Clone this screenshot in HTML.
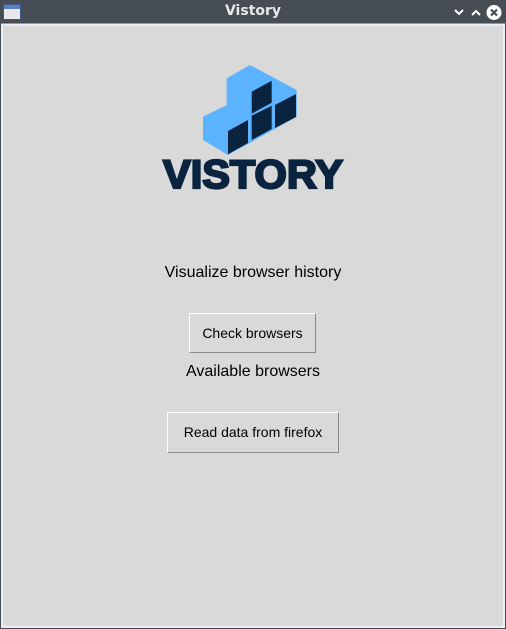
<!DOCTYPE html>
<html><head><style>
*{margin:0;padding:0;box-sizing:border-box}
body{width:506px;height:629px;background:#474d55;position:relative;overflow:hidden;font-family:"Liberation Sans","DejaVu Sans",sans-serif}
.tb{position:absolute;left:0;top:0;width:506px;height:23px;background:#474d55}
.title{position:absolute;top:3px;left:0;width:506px;text-align:center;color:#e8e8e8;font-weight:bold;font-size:14px;font-family:"DejaVu Sans",sans-serif}
.frame{position:absolute;left:1px;top:23px;width:504px;height:605px;background:#eceff1;border-top:1px solid #5fa7d8}
.content{position:absolute;left:3px;top:26px;width:500px;height:600px;background:#d9d9d9}
.t{position:absolute;left:0;width:506px;text-align:center;color:#000;font-size:16px}
.btn{position:absolute;background:#d9d9d9;border:1px solid;border-color:#fff #8a8a8a #8a8a8a #fff;font-size:14px;text-align:center;color:#000}
</style></head><body>
<div class="tb">
<svg style="position:absolute;left:3px;top:4px" width="18" height="16"><rect x="0.5" y="0.5" width="17" height="15" fill="#e8e8ec" stroke="#3a5a90"/><rect x="1" y="1" width="16" height="4" fill="#5a80c0"/></svg>
<div class="title">Vistory</div>
<svg style="position:absolute;left:450px;top:5px" width="56" height="16">
<path d="M5 5 L9 9 L13 5" stroke="#fff" stroke-width="2" fill="none"/>
<path d="M22 10 L26 6 L30 10" stroke="#fff" stroke-width="2" fill="none"/>
<circle cx="44" cy="7.5" r="7.5" fill="#fff"/>
<path d="M41 4.5 L47 10.5 M47 4.5 L41 10.5" stroke="#474d55" stroke-width="2.2"/>
</svg>
</div>
<div class="frame"></div>
<div class="content"></div>
<svg style="position:absolute;left:0;top:0" width="506" height="200">
<polygon points="226.7,78.3 250,65 296.7,90 296.7,116.7 228,155 203,140 203,116.7 226.7,105" fill="#5cb3ff"/>
<polygon points="251.7,91.7 271.7,80.7 271.7,102.7 251.7,113.7" fill="#0a2440"/>
<polygon points="275,105 296,94 296,117 275,128" fill="#0a2440"/>
<polygon points="251.7,115.7 271.7,105.7 271.7,129 251.7,140" fill="#0a2440"/>
<polygon points="228,131 248,120 248,143 228,154.3" fill="#0a2440"/>
<g transform="translate(0,188) scale(1,1.1) translate(0,-188)">
<text x="163" y="188" textLength="180" lengthAdjust="spacingAndGlyphs" font-family="Liberation Sans" font-weight="bold" font-size="36" fill="#0a2440" stroke="#0a2440" stroke-width="2">VISTORY</text>
</g>
</svg>
<div class="t" style="top:264px">Visualize browser history</div>
<div class="btn" style="left:189px;top:313px;width:127px;height:40px;line-height:38px">Check browsers</div>
<div class="t" style="top:363px">Available browsers</div>
<div class="btn" style="left:167px;top:412px;width:172px;height:41px;line-height:39px">Read data from firefox</div>
</body></html>
